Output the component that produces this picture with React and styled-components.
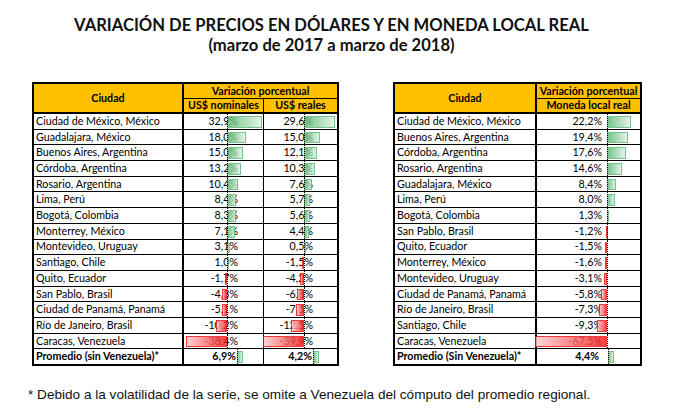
import React from 'react';
import styled, { createGlobalStyle } from 'styled-components';

const GlobalStyle = createGlobalStyle`
  html, body {
    margin: 0;
    padding: 0;
    background: #ffffff;
  }
  body {
    width: 675px;
    height: 420px;
    overflow: hidden;
    font-family: 'Lato', 'Liberation Sans', sans-serif;
    color: #000;
  }
`;

const Page = styled.div`
  display: flex;
  flex-direction: column;
  width: 675px;
  height: 420px;
  box-sizing: border-box;
  padding-top: 15px;
`;

const Title = styled.div`
  text-align: center;
  padding-right: 12px;
  font-family: 'Lato', sans-serif;
  font-weight: 700;
  font-size: 16.6px;
  line-height: 20px;
  color: #111;
`;

const Tables = styled.div`
  display: flex;
  align-items: flex-start;
  gap: 54px;
  padding-left: 32px;
  margin-top: 27px;
`;

const Grid = styled.div`
  display: grid;
  grid-template-columns: ${(p) => p.$cols};
  grid-template-rows: 14px 14px;
  grid-auto-rows: 14.7px;
  gap: 1px;
  background: #000;
  border: 2px solid #000;
  font-size: 10.7px;
`;

const HeadCell = styled.div`
  background: #ffc000;
  font-weight: 700;
  display: flex;
  align-items: center;
  justify-content: center;
  grid-row: ${(p) => p.$row || 'auto'};
  grid-column: ${(p) => p.$col || 'auto'};
  border-right: ${(p) => (p.$thick ? '1px solid #000' : 'none')};
  border-bottom: ${(p) => (p.$bottom ? '1px solid #000' : 'none')};
  line-height: 1;
  white-space: nowrap;
  overflow: hidden;
`;

const CityCell = styled.div`
  background: #fff;
  display: flex;
  align-items: center;
  padding-left: 2px;
  border-right: 1px solid #000;
  font-weight: ${(p) => (p.$bold ? 700 : 400)};
  white-space: nowrap;
  line-height: 1;
  overflow: hidden;
`;

const ValueCell = styled.div`
  position: relative;
  background: #fff;
  display: flex;
  align-items: center;
  justify-content: flex-end;
  padding-right: ${(p) => p.$pad}px;
  font-weight: ${(p) => (p.$bold ? 700 : 400)};
  white-space: nowrap;
  line-height: 1;
`;

const Bar = styled.div`
  position: absolute;
  top: 2px;
  bottom: 1px;
  box-sizing: border-box;
  opacity: 0.82;
  border: 1px solid ${(p) => (p.$neg ? '#f01010' : '#5cb874')};
  background: ${(p) =>
    p.$neg
      ? 'linear-gradient(to left, #f31a1a 0%, #ffcaca 100%)'
      : 'linear-gradient(to right, #5cb874 0%, #dcf1e2 100%)'};
`;

const Axis = styled.div`
  position: absolute;
  top: 0;
  bottom: 0;
  width: 0;
  border-left: 1px dotted #000;
`;

const Footnote = styled.div`
  font-family: 'Liberation Sans', Arial, sans-serif;
  font-size: 13.6px;
  padding-left: 28px;
  margin-top: 21px;
  color: #111;
`;

const leftRows = [
  ['Ciudad de México, México', 32.9, 29.6],
  ['Guadalajara, México', 18.0, 15.0],
  ['Buenos Aires, Argentina', 15.0, 12.1],
  ['Córdoba, Argentina', 13.2, 10.3],
  ['Rosario, Argentina', 10.4, 7.6],
  ['Lima, Perú', 8.4, 5.7],
  ['Bogotá, Colombia', 8.3, 5.6],
  ['Monterrey, México', 7.1, 4.4],
  ['Montevideo, Uruguay', 3.1, 0.5],
  ['Santiago, Chile', 1.0, -1.5],
  ['Quito, Ecuador', -1.7, -4.2],
  ['San Pablo, Brasil', -4.3, -6.8],
  ['Ciudad de Panamá, Panamá', -5.1, -7.5],
  ['Río de Janeiro, Brasil', -10.2, -12.5],
  ['Caracas, Venezuela', -38.4, -39.9],
];

const rightRows = [
  ['Ciudad de México, México', 22.2],
  ['Buenos Aires, Argentina', 19.4],
  ['Córdoba, Argentina', 17.6],
  ['Rosario, Argentina', 14.6],
  ['Guadalajara, México', 8.4],
  ['Lima, Perú', 8.0],
  ['Bogotá, Colombia', 1.3],
  ['San Pablo, Brasil', -1.2],
  ['Quito, Ecuador', -1.5],
  ['Monterrey, México', -1.6],
  ['Montevideo, Uruguay', -3.1],
  ['Ciudad de Panamá, Panamá', -5.8],
  ['Río de Janeiro, Brasil', -7.3],
  ['Santiago, Chile', -9.3],
  ['Caracas, Venezuela', -67.5],
];

const fmt = (v) => v.toFixed(1).replace('.', ',') + '%';

// axis = px from column's left edge, scale = px per percent
const Value = ({ v, axis, scale, pad }) => {
  const w = Math.max(1, Math.abs(v) * scale);
  const left = v >= 0 ? axis : axis - w;
  return (
    <ValueCell $pad={pad}>
      {fmt(v)}
      <Bar $neg={v < 0} style={{ left, width: w }} />
      <Axis style={{ left: axis }} />
    </ValueCell>
  );
};

const Average = ({ v, at, pad }) => (
  <ValueCell $pad={pad} $bold>
    {fmt(v)}
    <Bar style={{ left: at, width: 6 }} />
    <Axis style={{ left: at }} />
  </ValueCell>
);

const App = () => (
  <Page>
    <GlobalStyle />
    <Title>
      VARIACIÓN DE PRECIOS EN DÓLARES Y EN MONEDA LOCAL REAL
      <br />
      (marzo de 2017 a marzo de 2018)
    </Title>
    <Tables>
      <Grid $cols="149px 79px 73px">
        <HeadCell $row="1 / span 2" $col="1" $thick $bottom>
          Ciudad
        </HeadCell>
        <HeadCell $col="2 / span 2">Variación porcentual</HeadCell>
        <HeadCell $bottom>US$ nominales</HeadCell>
        <HeadCell $bottom>US$ reales</HeadCell>
        {leftRows.map(([city, a, b]) => (
          <React.Fragment key={city}>
            <CityCell>{city}</CityCell>
            <Value v={a} axis={43} scale={1.07} pad={25} />
            <Value v={b} axis={40} scale={1.04} pad={24} />
          </React.Fragment>
        ))}
        <CityCell $bold>Promedio (sin Venezuela)*</CityCell>
        <Average v={6.9} at={53} pad={27} />
        <Average v={4.2} at={49} pad={25} />
      </Grid>
      <Grid $cols="141px 103px">
        <HeadCell $row="1 / span 2" $col="1" $thick $bottom>
          Ciudad
        </HeadCell>
        <HeadCell>Variación porcentual</HeadCell>
        <HeadCell $bottom>Moneda local real</HeadCell>
        {rightRows.map(([city, a]) => (
          <React.Fragment key={city}>
            <CityCell>{city}</CityCell>
            <Value v={a} axis={70} scale={1.06} pad={38} />
          </React.Fragment>
        ))}
        <CityCell $bold>Promedio (Sin Venezuela)*</CityCell>
        <Average v={4.4} at={71} pad={41} />
      </Grid>
    </Tables>
    <Footnote>
      * Debido a la volatilidad de la serie, se omite a Venezuela del cómputo del promedio regional.
    </Footnote>
  </Page>
);

export default App;
